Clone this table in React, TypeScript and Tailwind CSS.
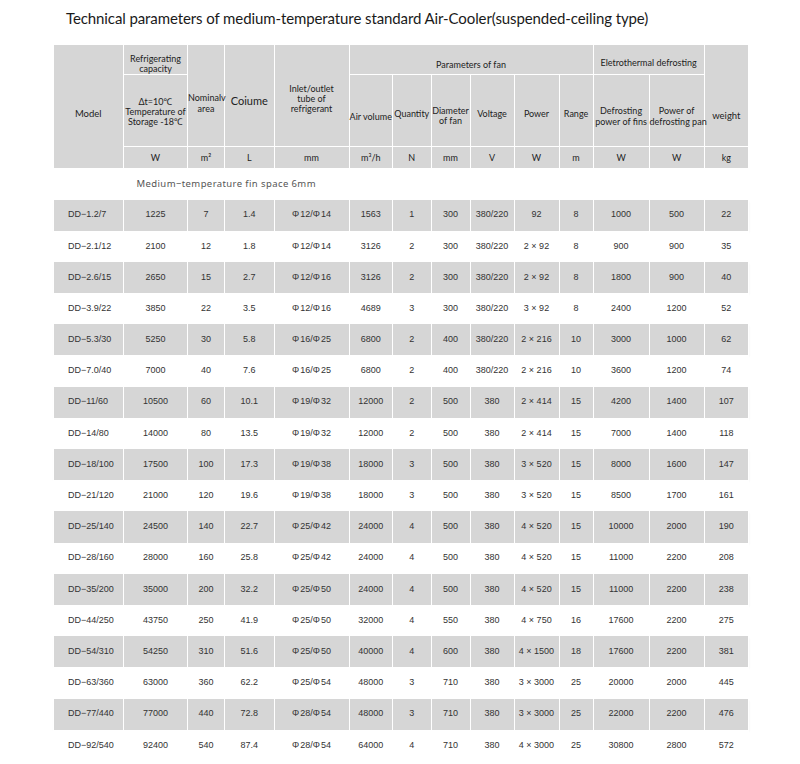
import React from 'react';

type Row = [string, string, string, string, string, string, string, string, string, string, string, string, string, string];

const rows: Row[] = [
  ['DD−1.2/7', '1225', '7', '1.4', 'Φ12/Φ14', '1563', '1', '300', '380/220', '92', '8', '1000', '500', '22'],
  ['DD−2.1/12', '2100', '12', '1.8', 'Φ12/Φ14', '3126', '2', '300', '380/220', '2 × 92', '8', '900', '900', '35'],
  ['DD−2.6/15', '2650', '15', '2.7', 'Φ12/Φ16', '3126', '2', '300', '380/220', '2 × 92', '8', '1800', '900', '40'],
  ['DD−3.9/22', '3850', '22', '3.5', 'Φ12/Φ16', '4689', '3', '300', '380/220', '3 × 92', '8', '2400', '1200', '52'],
  ['DD−5.3/30', '5250', '30', '5.8', 'Φ16/Φ25', '6800', '2', '400', '380/220', '2 × 216', '10', '3000', '1000', '62'],
  ['DD−7.0/40', '7000', '40', '7.6', 'Φ16/Φ25', '6800', '2', '400', '380/220', '2 × 216', '10', '3600', '1200', '74'],
  ['DD−11/60', '10500', '60', '10.1', 'Φ19/Φ32', '12000', '2', '500', '380', '2 × 414', '15', '4200', '1400', '107'],
  ['DD−14/80', '14000', '80', '13.5', 'Φ19/Φ32', '12000', '2', '500', '380', '2 × 414', '15', '7000', '1400', '118'],
  ['DD−18/100', '17500', '100', '17.3', 'Φ19/Φ38', '18000', '3', '500', '380', '3 × 520', '15', '8000', '1600', '147'],
  ['DD−21/120', '21000', '120', '19.6', 'Φ19/Φ38', '18000', '3', '500', '380', '3 × 520', '15', '8500', '1700', '161'],
  ['DD−25/140', '24500', '140', '22.7', 'Φ25/Φ42', '24000', '4', '500', '380', '4 × 520', '15', '10000', '2000', '190'],
  ['DD−28/160', '28000', '160', '25.8', 'Φ25/Φ42', '24000', '4', '500', '380', '4 × 520', '15', '11000', '2200', '208'],
  ['DD−35/200', '35000', '200', '32.2', 'Φ25/Φ50', '24000', '4', '500', '380', '4 × 520', '15', '11000', '2200', '238'],
  ['DD−44/250', '43750', '250', '41.9', 'Φ25/Φ50', '32000', '4', '550', '380', '4 × 750', '16', '17600', '2200', '275'],
  ['DD−54/310', '54250', '310', '51.6', 'Φ25/Φ50', '40000', '4', '600', '380', '4 × 1500', '18', '17600', '2200', '381'],
  ['DD−63/360', '63000', '360', '62.2', 'Φ25/Φ54', '48000', '3', '710', '380', '3 × 3000', '25', '20000', '2000', '445'],
  ['DD−77/440', '77000', '440', '72.8', 'Φ28/Φ54', '48000', '3', '710', '380', '3 × 3000', '25', '22000', '2200', '476'],
  ['DD−92/540', '92400', '540', '87.4', 'Φ28/Φ54', '64000', '4', '710', '380', '4 × 3000', '25', '30800', '2800', '572'],
];

const widths = [70, 64, 37, 49.5, 75, 43.5, 38.5, 39, 44, 45, 34, 56, 55, 44.5];

const th = 'bg-[#d6d6d6] border border-white text-center align-middle font-normal text-[#222] p-0 whitespace-nowrap';

function Phi({ v }: { v: string }) {
  const parts = v.split('/');
  return (
    <span>
      {parts.map((p, i) => (
        <React.Fragment key={i}>
          {i > 0 && '/'}
          <span className="mr-[1px]">Φ</span>
          {p.replace('Φ', '')}
        </React.Fragment>
      ))}
    </span>
  );
}

export default function App() {
  return (
    <div className="w-[800px] h-[764px] overflow-hidden bg-white">
      <h1
        className="pl-[66px] pt-[6px] h-[44px] text-[15px] leading-[24px] tracking-[-0.1px] text-[#1a1a1a] font-normal"
        style={{ fontFamily: 'Lato, "Open Sans", sans-serif' }}
      >
        Technical parameters of medium-temperature standard Air-Cooler(suspended-ceiling type)
      </h1>
      <div className="pl-[53px]">
        <table className="table-fixed border-collapse w-[695px]" style={{ fontFamily: 'Lato, "Noto Sans", sans-serif' }}>
          <colgroup>
            {widths.map((w, i) => (
              <col key={i} style={{ width: `${w}px` }} />
            ))}
          </colgroup>
          <thead className="text-[9px] leading-[10px]">
            <tr className="h-[30px]">
              <th rowSpan={3} className={`${th} border-l-0 text-[9.5px] pt-[14px]`}>Model</th>
              <th className={`${th} leading-[10px] pt-[8px]`}>Refrigerating<br />capacity</th>
              <th rowSpan={2} className={`${th} leading-[11px] pt-[14px]`}>Nominalv<br />area</th>
              <th rowSpan={2} className={`${th} text-[11px] pt-[10px]`}>Coiume</th>
              <th rowSpan={2} className={`${th} pt-[6px] leading-[10px]`}>Inlet/outlet<br />tube of<br />refrigerant</th>
              <th colSpan={6} className={`${th} pt-[10px]`}>Parameters of fan</th>
              <th colSpan={2} className={`${th} pt-[6px]`}>Eletrothermal defrosting</th>
              <th rowSpan={2} className={`${th} text-[9.5px] pt-[40px]`}>weight</th>
            </tr>
            <tr className="h-[72px]">
              <th className={`${th} leading-[10px] pt-[2px]`}>Δt=10℃<br />Temperature of<br />Storage -18℃</th>
              <th className={`${th} pt-[12px]`}>Air volume</th>
              <th className={`${th} pt-[6px]`}>Quantity</th>
              <th className={`${th} pt-[10px]`}>Diameter<br />of fan</th>
              <th className={`${th} pt-[6px]`}>Voltage</th>
              <th className={`${th} pt-[6px]`}>Power</th>
              <th className={`${th} pt-[6px]`}>Range</th>
              <th className={`${th} leading-[11px] pt-[10px]`}>Defrosting<br />power of fins</th>
              <th className={`${th} leading-[11px] pt-[10px]`}>Power of<br />defrosting pan</th>
            </tr>
            <tr className="h-[22px] text-[9px]">
              <th className={th}>W</th>
              <th className={th}>m²</th>
              <th className={th}>L</th>
              <th className={th}>mm</th>
              <th className={th}>m³/h</th>
              <th className={th}>N</th>
              <th className={th}>mm</th>
              <th className={th}>V</th>
              <th className={th}>W</th>
              <th className={th}>m</th>
              <th className={th}>W</th>
              <th className={th}>W</th>
              <th className={th}>kg</th>
            </tr>
          </thead>
          <tbody className="text-[9px] text-[#333]" style={{ fontFamily: '"Liberation Sans", Arial, sans-serif' }}>
            <tr className="h-[31px]">
              <td
                colSpan={14}
                className="pl-[83px] text-[9.5px] tracking-[0.4px] text-[#555]"
                style={{ fontFamily: '"Noto Sans", sans-serif' }}
              >
                Medium−temperature fin space 6mm
              </td>
            </tr>
            {rows.map((r, i) => (
              <tr
                key={r[0]}
                className={`h-[31.2px] ${i % 2 === 0 ? 'bg-[#d6d6d6] shadow-[0_2px_2px_rgba(0,0,0,0.06)]' : 'bg-white'}`}
              >
                {r.map((c, j) => (
                  <td
                    key={j}
                    className={`border-x border-white p-0 whitespace-nowrap ${j === 0 ? 'text-left pl-[14px]' : 'text-center'}`}
                  >
                    {j === 4 ? <Phi v={c} /> : c}
                  </td>
                ))}
              </tr>
            ))}
          </tbody>
        </table>
      </div>
    </div>
  );
}
